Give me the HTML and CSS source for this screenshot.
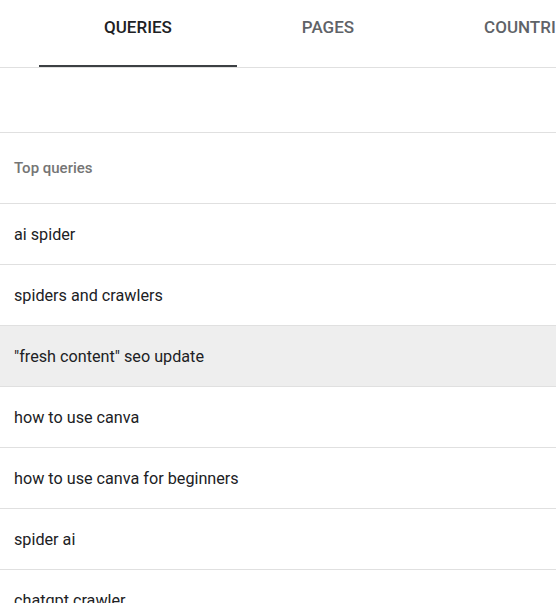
FILE: index.html
```html
<!DOCTYPE html>
<html>
<head>
<meta charset="utf-8">
<link rel="stylesheet" href="styles.css">
</head>
<body>
<div class="tabs">
  <div class="tab active">QUERIES</div>
  <div class="tab">PAGES</div>
  <div class="tab">COUNTRIES</div>
</div>
<div class="spacer"></div>
<div class="table">
  <div class="head">Top queries</div>
  <div class="row">ai spider</div>
  <div class="row">spiders and crawlers</div>
  <div class="row hl">"fresh content" seo update</div>
  <div class="row">how to use canva</div>
  <div class="row">how to use canva for beginners</div>
  <div class="row">spider ai</div>
  <div class="row">chatgpt crawler</div>
</div>
</body>
</html>
```
FILE: styles.css
```css
html, body {
  margin: 0;
  padding: 0;
  background: #fff;
  font-family: Roboto, "Liberation Sans", sans-serif;
  overflow: hidden;
}
.tabs {
  display: flex;
  height: 68px;
  padding-left: 39px;
  border-bottom: 1px solid #e0e0e0;
  box-sizing: border-box;
  white-space: nowrap;
}
.tab {
  padding: 0 65px;
  font-size: 17px;
  font-weight: 500;
  color: #5f6368;
  line-height: 55px;
  box-sizing: border-box;
  flex: none;
}
.tab.active {
  color: #202124;
  border-bottom: 2px solid #3c4043;
  height: 67px;
}
.spacer {
  height: 64px;
  border-bottom: 1px solid #e0e0e0;
}
.head {
  height: 70px;
  display: flex;
  align-items: center;
  padding-left: 14px;
  font-size: 15px;
  font-weight: 500;
  color: #757575;
  border-bottom: 1px solid #e0e0e0;
}
.row {
  height: 60px;
  display: flex;
  align-items: center;
  padding-left: 14px;
  font-size: 16.2px;
  color: #202124;
  border-bottom: 1px solid #e0e0e0;
}
.row.hl {
  background: #eeeeee;
}
```
